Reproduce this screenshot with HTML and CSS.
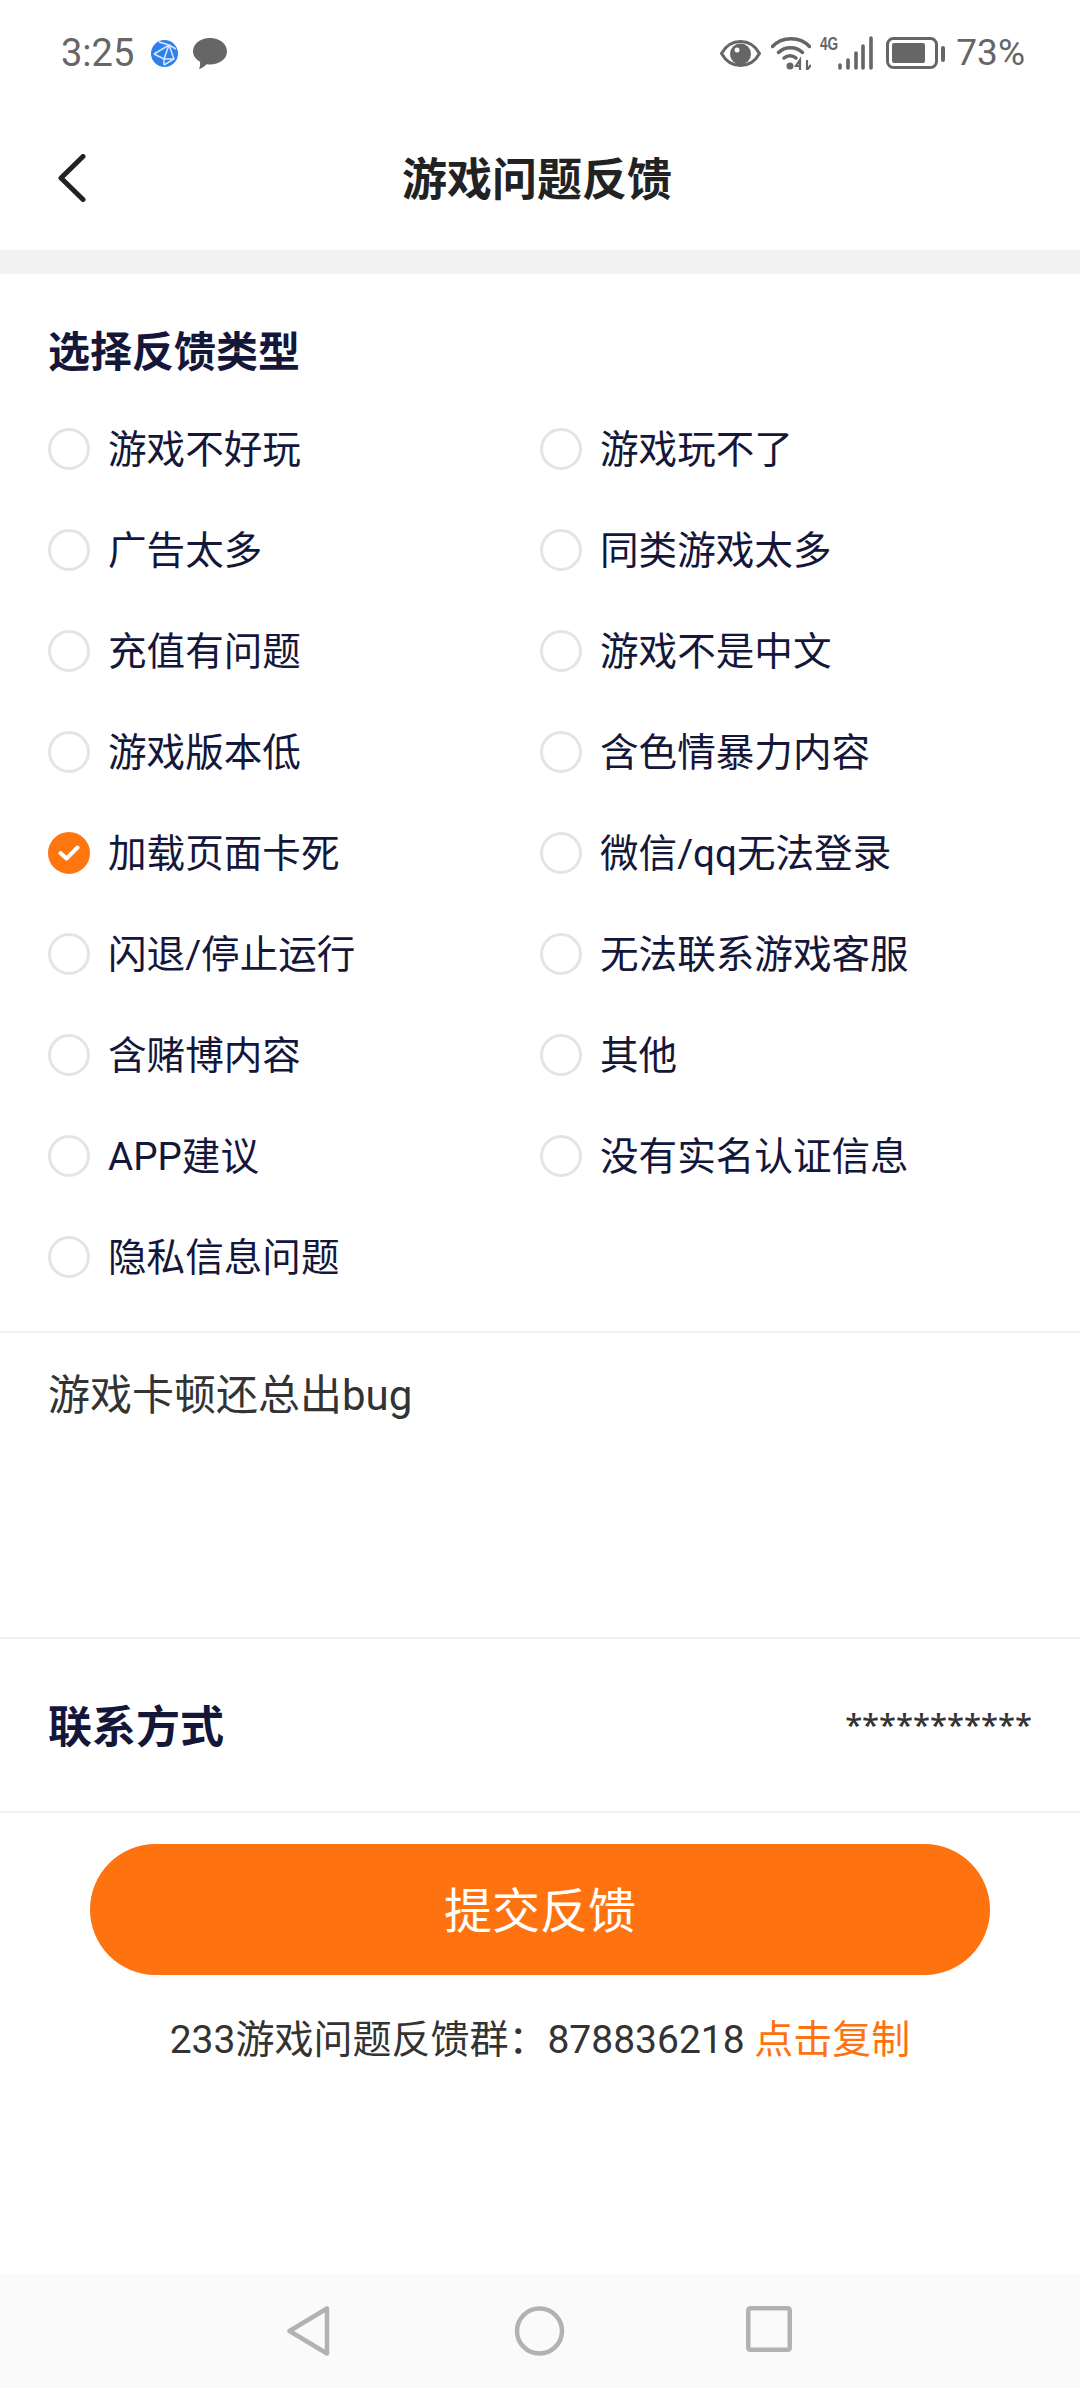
FILE: index.html
```html
<!DOCTYPE html>
<html lang="zh-CN">
  <head>
    <meta charset="UTF-8" />
    <meta name="viewport" content="width=device-width, initial-scale=1.0" />
    <title>游戏问题反馈</title>
    <link rel="stylesheet" href="styles.css">
  </head>
  <body>
    <div class="page">
      <div class="status-bar">
        <div class="status-left">
          <span class="time">3:25</span>
          <svg class="icon-globe" width="27" height="27" viewBox="0 0 27 27">
            <circle cx="13.5" cy="13.5" r="13.5" fill="#2f80ed" />
            <path d="M3 14L18 5L23 19L13 25M3 14L13 19L23 19M18 5L13 19L13 25M8 2L18 5L25 9" fill="none" stroke="#d8e8fb" stroke-width="1.5" />
          </svg>
          <svg class="icon-chat" width="34" height="31" viewBox="0 0 34 31">
            <path d="M17 0C26.4 0 34 5.6 34 13.5C34 21 26.4 26.500 17 26.500C15.500 26.500 14.500 26.400 13.500 26.200C11.500 28.500 8.500 30.500 6 31C7 29 7.400 26 7 23.800C2.800 21.300 0 17.700 0 13.500C0 5.600 7.600 0 17 0Z" fill="#666" />
          </svg>
        </div>
        <div class="status-right">
          <svg width="41" height="27" viewBox="0 0 41 27">
            <path d="M1.500 13.500C6 5.500 13 1.500 20.500 1.500C28 1.500 35 5.500 39.500 13.500C35 21.500 28 25.500 20.500 25.500C13 25.500 6 21.500 1.500 13.500Z" fill="none" stroke="#666" stroke-width="3" />
            <circle cx="20.500" cy="14" r="10.500" fill="#666" />
            <circle cx="17" cy="10" r="2.500" fill="#fff" />
          </svg>
          <svg class="icon-wifi" width="40" height="34" viewBox="0 0 40 34">
            <path d="M1.500 10.500C11 0 29 0 38.500 10.500" fill="none" stroke="#666" stroke-width="3.500" stroke-linecap="round" />
            <path d="M7.500 16.500C14 10 25 10 31.500 16.500" fill="none" stroke="#666" stroke-width="3.500" stroke-linecap="round" />
            <path d="M13 22C16.500 19 21.500 19 25 22" fill="none" stroke="#666" stroke-width="3.500" stroke-linecap="round" />
            <circle cx="19" cy="30" r="3.500" fill="#666" />
            <path d="M29 34V24L25 30H29M36 24V34L40 29" fill="none" stroke="#666" stroke-width="2.200" />
          </svg>
          <div class="signal">
            <span class="signal-label">4G</span>
            <svg width="35" height="34" viewBox="0 0 35 34">
              <path d="M2 29V32M10 24V32M18 17V32M25 10V32M33 2V32" fill="none" stroke="#666" stroke-width="3.600" stroke-linecap="round" />
            </svg>
          </div>
          <svg class="icon-battery" width="59" height="32" viewBox="0 0 59 32">
            <rect x="1.500" y="1.500" width="49" height="29" rx="6" fill="none" stroke="#666" stroke-width="3" />
            <rect x="6" y="6" width="33" height="20" rx="2" fill="#666" />
            <rect x="55" y="9" width="4" height="16" rx="2" fill="#666" />
          </svg>
          <span class="battery-text">73%</span>
        </div>
      </div>

      <div class="header">
        <svg class="back" width="28" height="48" viewBox="0 0 28 48">
          <path d="M25 2.500L3 24L25 45.500" fill="none" stroke="#222" stroke-width="5" stroke-linecap="round" stroke-linejoin="round" />
        </svg>
        <h1 class="title">游戏问题反馈</h1>
      </div>
      <div class="band"></div>

      <div class="types">
        <h2 class="section-title">选择反馈类型</h2>
        <div class="option-grid">
          <div class="option"><span class="radio"></span>游戏不好玩</div>
          <div class="option"><span class="radio"></span>游戏玩不了</div>
          <div class="option"><span class="radio"></span>广告太多</div>
          <div class="option"><span class="radio"></span>同类游戏太多</div>
          <div class="option"><span class="radio"></span>充值有问题</div>
          <div class="option"><span class="radio"></span>游戏不是中文</div>
          <div class="option"><span class="radio"></span>游戏版本低</div>
          <div class="option"><span class="radio"></span>含色情暴力内容</div>
          <div class="option">
            <span class="radio radio-on">
              <svg width="22" height="18" viewBox="0 0 22 18">
                <path d="M2.500 9L8.500 14.500L19.500 3.500" fill="none" stroke="#fff" stroke-width="4" stroke-linecap="round" stroke-linejoin="round" />
              </svg>
            </span>加载页面卡死
          </div>
          <div class="option"><span class="radio"></span>微信/qq无法登录</div>
          <div class="option"><span class="radio"></span>闪退/停止运行</div>
          <div class="option"><span class="radio"></span>无法联系游戏客服</div>
          <div class="option"><span class="radio"></span>含赌博内容</div>
          <div class="option"><span class="radio"></span>其他</div>
          <div class="option"><span class="radio"></span>APP建议</div>
          <div class="option"><span class="radio"></span>没有实名认证信息</div>
          <div class="option"><span class="radio"></span>隐私信息问题</div>
        </div>
      </div>

      <div class="detail">游戏卡顿还总出bug</div>

      <div class="contact">
        <h2 class="section-title contact-title">联系方式</h2>
        <span class="contact-value">***********</span>
      </div>

      <div class="submit-wrap">
        <div class="submit">提交反馈</div>
      </div>
      <p class="group">233游戏问题反馈群：878836218 <span class="copy">点击复制</span></p>

      <div class="nav-bar">
        <svg class="nav-back" width="43" height="50" viewBox="0 0 43 50">
          <path d="M40 2.500V47.500L2.500 25Z" fill="none" stroke="#b2b2b2" stroke-width="4.500" stroke-linejoin="round" />
        </svg>
        <svg class="nav-home" width="51" height="50" viewBox="0 0 51 50">
          <circle cx="25.500" cy="25" r="22.500" fill="none" stroke="#b2b2b2" stroke-width="4.500" />
        </svg>
        <svg class="nav-recent" width="46" height="46" viewBox="0 0 46 46">
          <rect x="2.250" y="2.250" width="41.500" height="41.500" rx="2" fill="none" stroke="#b2b2b2" stroke-width="4.500" />
        </svg>
      </div>
    </div>
  </body>
</html>
```

FILE: styles.css
```css
* {
  padding: 0;
  margin: 0;
  box-sizing: border-box;
}
body {
  background-color: #fff;
  font-family: Roboto, "Noto Sans CJK SC", sans-serif;
  color: #14163a;
}
.page {
  display: flex;
  flex-direction: column;
  min-height: 100vh;
}

/* status bar */
.status-bar {
  height: 106px;
  padding: 36px 55px 0 61px;
  display: flex;
  justify-content: space-between;
  align-items: flex-start;
  color: #666;
}
.status-left,
.status-right {
  display: flex;
  align-items: center;
  height: 34px;
}
.time {
  font-size: 38px;
  line-height: 34px;
  margin-right: 17px;
}
.icon-chat {
  margin-left: 15px;
}
.icon-wifi {
  margin-left: 10px;
}
.signal {
  display: flex;
  align-items: flex-start;
  margin-left: 9px;
  height: 34px;
}
.signal-label {
  font-family: "Liberation Sans", sans-serif;
  font-size: 19px;
  font-weight: 700;
  line-height: 16px;
  width: 18px;
  transform: scaleX(0.72);
  transform-origin: left top;
}
.icon-battery {
  margin-left: 13px;
}
.battery-text {
  font-size: 37px;
  line-height: 34px;
  margin-left: 11px;
}

/* header */
.header {
  height: 144px;
  padding: 0 6px 3px 0;
  display: flex;
  align-items: center;
  justify-content: center;
  position: relative;
}
.back {
  position: absolute;
  left: 58px;
  top: 48px;
}
.title {
  font-size: 45px;
  font-weight: 700;
  color: #222;
}
.band {
  height: 24px;
  background-color: #f2f2f2;
}

/* feedback types */
.types {
  padding: 49px 0 27px 48px;
  border-bottom: 2px solid #f0f0f0;
}
.section-title {
  font-size: 42px;
  line-height: 60px;
  font-weight: 700;
  color: #14163a;
}
.option-grid {
  margin-top: 12px;
  display: grid;
  grid-template-columns: 492px 1fr;
  grid-auto-rows: 101px;
}
.option {
  display: flex;
  align-items: center;
  gap: 18px;
  font-size: 38.6px;
}
.radio {
  width: 42px;
  height: 42px;
  margin-top: 6px;
  border-radius: 50%;
  border: 3px solid #e4e4e4;
  flex-shrink: 0;
  display: flex;
  align-items: center;
  justify-content: center;
}
.radio-on {
  background-color: #ff7510;
  border-color: #ff7510;
}

/* text box */
.detail {
  height: 306px;
  padding: 35px 48px 0;
  font-size: 42px;
  line-height: 56px;
  color: #333;
  border-bottom: 2px solid #f0f0f0;
}

/* contact */
.contact {
  height: 174px;
  padding: 0 48px;
  display: flex;
  align-items: center;
  justify-content: space-between;
  border-bottom: 2px solid #f0f0f0;
}
.contact-title {
  font-size: 44px;
  margin-top: 5px;
}
.contact-value {
  font-family: "Noto Sans", sans-serif;
  font-size: 31px;
  font-weight: 500;
  color: #333;
  margin-top: -3px;
}

/* submit */
.submit-wrap {
  padding: 31px 90px 0;
}
.submit {
  height: 131px;
  padding-bottom: 6px;
  border-radius: 66px;
  background-color: #ff7210;
  color: #fff;
  font-size: 48px;
  display: flex;
  align-items: center;
  justify-content: center;
}
.group {
  margin-top: 37px;
  text-align: center;
  font-size: 39px;
  line-height: 56px;
  color: #333;
}
.copy {
  color: #ff7210;
}

/* nav */
.nav-bar {
  margin-top: auto;
  height: 114px;
  background-color: #fafafa;
  padding: 32px 0 0 287px;
  display: flex;
  align-items: flex-start;
}
.nav-back {
  margin-right: 184px;
}
.nav-home {
  margin-right: 181px;
}
```
